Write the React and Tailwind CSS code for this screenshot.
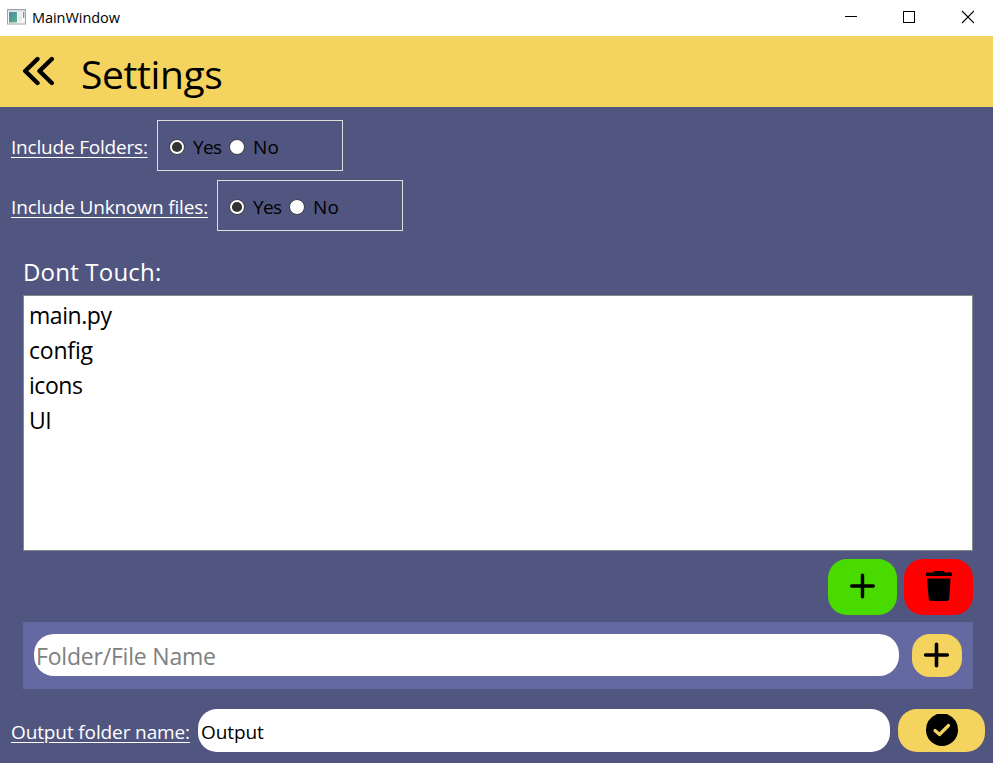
import React from "react";

function Radio({ checked }) {
  return (
    <svg width="16" height="16" viewBox="0 0 16 16" className="shrink-0">
      <circle cx="8" cy="8" r="7.5" fill="#fff" stroke="#3c3c46" strokeWidth="1" />
      {checked && <circle cx="8" cy="8" r="5.1" fill="#333" />}
    </svg>
  );
}

function YesNo() {
  return (
    <div className="flex h-[51px] w-[186px] items-center border border-[#dedfdc] pt-[2px] pl-[11px] text-[19px] text-black">
      <Radio checked />
      <span className="mt-[1px] ml-[8px] w-[36px] tracking-[-0.7px]">Yes</span>
      <Radio />
      <span className="mt-[1px] ml-[8px] tracking-[0.2px]">No</span>
    </div>
  );
}

function Plus({ className, thick }) {
  return (
    <svg width="26" height="26" viewBox="0 0 26 26" className={className} stroke="#000" strokeWidth={thick} strokeLinecap="round">
      <path d="M12.500 2.200V23.800M1.700 13H23.300" />
    </svg>
  );
}

export default function App() {
  return (
    <div className="flex h-[763px] w-[993px] flex-col overflow-hidden bg-[#515681] font-['Open_Sans','Noto_Sans',sans-serif] leading-none">
      <div className="flex h-[36px] shrink-0 items-center bg-white">
        <svg width="19" height="16" viewBox="0 0 19 16" className="ml-[7px] -mt-[2px]">
          <defs>
            <linearGradient id="pane" x1="0" y1="0" x2="1" y2="1">
              <stop offset="0" stopColor="#4a86ad" />
              <stop offset="1" stopColor="#5fb382" />
            </linearGradient>
          </defs>
          <rect x="0.5" y="0.5" width="18" height="14.5" fill="#f7f8f8" stroke="#9da3aa" />
          <rect x="1" y="1" width="17" height="1.5" fill="#d5dae0" />
          <rect x="2" y="3" width="8" height="10.5" fill="url(#pane)" />
          <rect x="11" y="3" width="4" height="10" fill="#e8eaec" />
          <rect x="16" y="3" width="1.3" height="6" fill="#5d9fae" />
        </svg>
        <span className="ml-[6px] text-[14.5px] tracking-[-0.05px] text-black">MainWindow</span>
        <svg width="130" height="14" viewBox="0 0 130 14" className="mr-[19px] -mt-[2px] ml-auto" fill="none" stroke="#000" shapeRendering="crispEdges">
          <path d="M1 6.5H13" />
          <rect x="59.5" y="1.5" width="11" height="11" />
          <path d="M118 1L130 13M130 1L118 13" shapeRendering="auto" strokeWidth="1.1" />
        </svg>
      </div>

      <div className="flex h-[71px] shrink-0 items-center bg-[#f4d35e]">
        <svg width="34" height="30" viewBox="0 0 34 30" className="ml-[22px] -mt-[1px]" fill="none" stroke="#000" strokeWidth="4.4" strokeLinecap="round" strokeLinejoin="round">
          <path d="M15.500 3L3.200 15L15.500 27M29.800 3L17.500 15L29.800 27" />
        </svg>
        <h1 className="mt-[3px] ml-[25px] text-[39px] font-normal tracking-[-0.4px] text-black">Settings</h1>
      </div>

      <div className="flex flex-col gap-[9px] pt-[13px] pl-[11px] text-[19px] tracking-[-0.15px] text-white">
        <div className="flex items-center">
          <div className="mt-[3px] w-[146px] whitespace-nowrap tracking-[-0.2px] underline underline-offset-[3px]">Include Folders:</div>
          <YesNo />
        </div>
        <div className="flex items-center">
          <div className="mt-[3px] w-[206px] whitespace-nowrap underline underline-offset-[3px]">Include Unknown files:</div>
          <YesNo />
        </div>
      </div>

      <div className="flex flex-col pr-[20px] pl-[23px]">
        <h2 className="flex h-[64px] items-end pb-[11px] text-[24px] font-normal tracking-[0.2px] text-white">Dont Touch:</h2>
        <ul className="h-[256px] border border-[#85878d] bg-white pt-[2px] pl-[5px] text-[23px] tracking-[-0.45px] text-black">
          <li className="flex h-[35px] items-center">main.py</li>
          <li className="flex h-[35px] items-center tracking-[-0.2px]">config</li>
          <li className="flex h-[35px] items-center">icons</li>
          <li className="flex h-[35px] items-center">UI</li>
        </ul>
        <div className="mt-[8px] flex justify-end gap-[7px]">
          <button className="flex h-[56px] w-[69px] items-center justify-center rounded-[19px] bg-[#49da00]">
            <Plus thick="3.4" className="-mt-[2px]" />
          </button>
          <button className="flex h-[56px] w-[69px] items-center justify-center rounded-[19px] bg-[#ff0000]">
            <svg width="26" height="30" viewBox="0 0 26 30" className="-mt-[2px]">
              <path d="M0 2.500Q0 1.500 1 1.500H7L8.500 0H17.500L19 1.500H25Q26 1.500 26 2.500V5H0ZM1 7.500H24.500L23.200 28Q23 30 21 30H5Q3 30 2.700 28Z" />
            </svg>
          </button>
        </div>
        <div className="mt-[7px] flex h-[67px] items-start bg-[#646aa1] pt-[12px] pl-[11px]">
          <div className="flex h-[42px] w-[865px] items-center rounded-[20px] bg-white pt-[3px] pl-[2px] text-[23px] tracking-[-0.2px] text-[#808080]">Folder/File Name</div>
          <button className="ml-[13px] flex h-[43px] w-[50px] items-center justify-center rounded-[18px] bg-[#f4d35e]">
            <Plus thick="3.6" className="-mt-[2px]" />
          </button>
        </div>
      </div>

      <div className="mt-[20px] flex h-[43px] items-center pl-[11px]">
        <div className="mt-[3px] w-[187px] whitespace-nowrap text-[19px] tracking-[-0.12px] text-white underline underline-offset-[3px]">Output folder name:</div>
        <div className="flex h-[43px] w-[692px] items-center rounded-[19px] bg-white pt-[3px] pl-[3px] text-[19px] tracking-[-0.1px] text-black">Output</div>
        <button className="ml-[8px] flex h-[43px] w-[87px] items-center justify-center rounded-[19px] bg-[#f4d35e]">
          <svg width="32" height="32" viewBox="0 0 32 32" className="-mt-[2px]">
            <path d="M11 0H21Q32 5 32 16A16 16 0 0 1 0 16Q0 5 11 0Z" />
            <path d="M9 16.500L13.500 20.500L22.500 11.500" fill="none" stroke="#f4d35e" strokeWidth="3.2" strokeLinecap="round" strokeLinejoin="round" />
          </svg>
        </button>
      </div>
    </div>
  );
}
